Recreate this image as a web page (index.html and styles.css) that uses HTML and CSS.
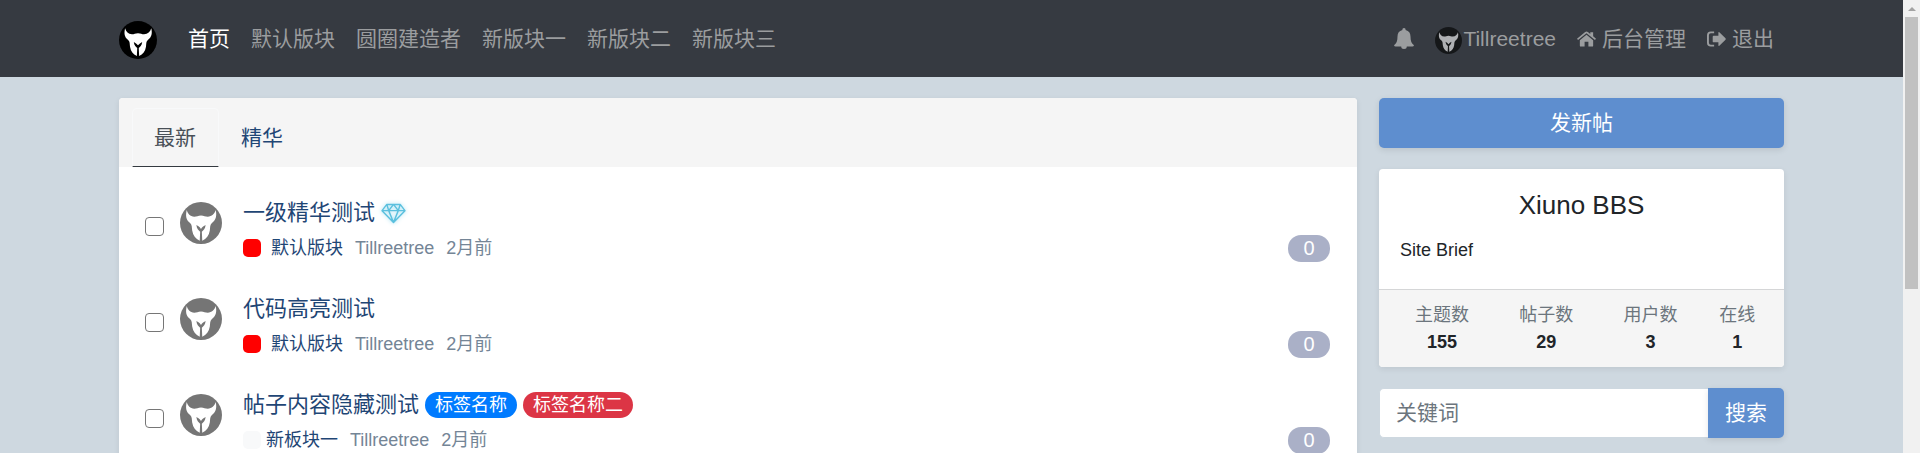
FILE: index.html
```html
<!DOCTYPE html>
<html lang="zh-CN">
<head>
    <meta charset="UTF-8">
    <meta name="viewport" content="width=device-width, initial-scale=1.0">
    <title>Xiuno BBS</title>
    <link rel="stylesheet" href="styles.css">
</head>
<body>

    <!-- Shared icons -->
    <svg class="sprite" aria-hidden="true">
        <symbol id="helmet" viewBox="0 0 100 100">
            <circle cx="50" cy="50" r="50" fill="currentColor"/>
            <path class="face" d="M16 19C19 29 24 34 34 35C40 35 43 32 50 32C57 32 60 35 66 35C76 34 82 29 85 19C88 33 86 42 76 50C71 54 72 60 71 68C69 80 63 88 53 92L52 71C56 67 60 64 61 55C57 57 53 60 50 64C47 60 43 57 39 55C40 64 44 67 48 71L47 92C37 88 31 80 29 68C28 60 29 54 24 50C14 42 13 33 16 19Z"/>
        </symbol>
    </svg>

    <div class="page">
        <header class="navbar">
            <div class="container nav-inner">
                <a class="logo" href="#"><svg><use href="#helmet"/></svg></a>
                <nav class="nav-links">
                    <a class="active" href="#">首页</a>
                    <a href="#">默认版块</a>
                    <a href="#">圆圈建造者</a>
                    <a href="#">新版块一</a>
                    <a href="#">新版块二</a>
                    <a href="#">新版块三</a>
                </nav>
                <nav class="nav-links nav-user">
                    <a href="#" aria-label="通知">
                        <svg class="icon-bell" viewBox="0 0 20 21"><path d="M10 0C11 0 11.800 .8 11.600 1.900C15 2.700 16.500 5 16.500 8.500C16.500 13 17.500 15.500 20 17.300Q19.600 18.500 18.500 18.500H12.800A2.800 2.500 0 0 1 7.200 18.500H1.500Q.4 18.500 0 17.300C2.500 15.500 3.500 13 3.500 8.500C3.500 5 5 2.700 8.400 1.900C8.200 .8 9 0 10 0Z"/></svg>
                    </a>
                    <a href="#"><svg class="user-avatar"><use href="#helmet"/></svg>Tillreetree</a>
                    <a href="#">
                        <svg class="icon-nav" viewBox="0 0 20 16"><path d="M10 3.500L17 9.300V15Q17 16 16 16H12V11H8V16H4Q3 16 3 15V9.300Z"/><path d="M10 0Q10.800 0 11.400 .5L14 2.700V.8H17V5.200L20 7.700L18.900 9L10 1.900L1.100 9L0 7.700L8.600 .5Q9.200 0 10 0Z"/></svg>
                        <span>后台管理</span>
                    </a>
                    <a href="#">
                        <svg class="icon-nav" viewBox="0 0 20 16"><path d="M7.500 0V2H4Q2 2 2 4V12Q2 14 4 14H7.500V16H4Q0 16 0 12V4Q0 0 4 0Z"/><path d="M12 1.500Q12 .3 13 1L19.500 7.300Q20 8 19.500 8.700L13 15Q12 15.700 12 14.500V11.500H7Q6 11.500 6 10.500V5.500Q6 4.500 7 4.500H12Z"/></svg>
                        <span>退出</span>
                    </a>
                </nav>
            </div>
        </header>

        <div class="container layout">
            <main class="card threads">
                <nav class="tabs">
                    <a class="active" href="#">最新</a>
                    <a href="#">精华</a>
                </nav>
                <ul class="thread-list">
                    <li class="thread">
                        <input type="checkbox" aria-label="选择 一级精华测试">
                        <svg class="avatar"><use href="#helmet"/></svg>
                        <div class="thread-body">
                            <div class="subject">
                                <a href="#">一级精华测试</a>
                                <svg class="icon-gem" viewBox="0 0 26 22"><path d="M6 1.500H20L25 8L13 20.500L1 8ZM1 8H25M6 1.500L8 8L13 20.500L18 8L20 1.500M8 8L13 1.500L18 8"/></svg>
                            </div>
                            <div class="meta">
                                <span class="forum"><i class="swatch red"></i><a href="#">默认版块</a></span>
                                <span>Tillreetree</span>
                                <span>2月前</span>
                            </div>
                        </div>
                        <span class="count">0</span>
                    </li>
                    <li class="thread">
                        <input type="checkbox" aria-label="选择 代码高亮测试">
                        <svg class="avatar"><use href="#helmet"/></svg>
                        <div class="thread-body">
                            <div class="subject">
                                <a href="#">代码高亮测试</a>
                            </div>
                            <div class="meta">
                                <span class="forum"><i class="swatch red"></i><a href="#">默认版块</a></span>
                                <span>Tillreetree</span>
                                <span>2月前</span>
                            </div>
                        </div>
                        <span class="count">0</span>
                    </li>
                    <li class="thread">
                        <input type="checkbox" aria-label="选择 帖子内容隐藏测试">
                        <svg class="avatar"><use href="#helmet"/></svg>
                        <div class="thread-body">
                            <div class="subject">
                                <a href="#">帖子内容隐藏测试</a>
                                <a class="tag blue" href="#">标签名称</a>
                                <a class="tag crimson" href="#">标签名称二</a>
                            </div>
                            <div class="meta">
                                <span class="forum tight"><i class="swatch light"></i><a href="#">新板块一</a></span>
                                <span>Tillreetree</span>
                                <span>2月前</span>
                            </div>
                        </div>
                        <span class="count">0</span>
                    </li>
                </ul>
            </main>

            <aside class="sidebar">
                <button class="btn" type="button">发新帖</button>

                <section class="card site">
                    <div class="site-intro">
                        <h2>Xiuno BBS</h2>
                        <p>Site Brief</p>
                    </div>
                    <div class="site-stats">
                        <table>
                            <thead>
                                <tr>
                                    <th>主题数</th>
                                    <th>帖子数</th>
                                    <th>用户数</th>
                                    <th>在线</th>
                                </tr>
                            </thead>
                            <tbody>
                                <tr>
                                    <td>155</td>
                                    <td>29</td>
                                    <td>3</td>
                                    <td>1</td>
                                </tr>
                            </tbody>
                        </table>
                    </div>
                </section>

                <form class="search">
                    <input type="text" placeholder="关键词" aria-label="关键词">
                    <button class="btn" type="submit">搜索</button>
                </form>
            </aside>
        </div>
    </div>

    <div class="scrollbar" aria-hidden="true">
        <div class="arrow"></div>
        <div class="thumb"></div>
    </div>

</body>
</html>
```
FILE: styles.css
```css
* {
    box-sizing: border-box;
}

body {
    margin: 0;
    display: flex;
    height: 100vh;
    overflow: hidden;
    background-color: #ced8e0;
    color: #212529;
    font-family: "Liberation Sans", "Noto Sans CJK SC", sans-serif;
    font-size: 21px;
    line-height: 32px;
}

a {
    color: #1f4675;
    text-decoration: none;
}

svg {
    flex: none;
    fill: currentColor;
}

.sprite {
    position: absolute;
    width: 0;
    height: 0;
}

.face {
    fill: #fff;
}

.page {
    flex: 1;
    min-width: 0;
    overflow: hidden;
}

.container {
    max-width: 1665px;
    margin: 0 auto;
}

/* Top bar */
.navbar {
    background-color: #363a41;
}

.nav-inner {
    display: flex;
    align-items: center;
    height: 77px;
    padding-right: 10px;
}

.logo {
    height: 38px;
    margin: 3px 31px 0 0;
    color: #000;
}

.logo svg {
    display: block;
    width: 38px;
    height: 38px;
}

.nav-links {
    display: flex;
    gap: 21px;
}

.nav-links a {
    display: flex;
    align-items: center;
    gap: 6px;
    color: #9b9d9f;
}

.nav-links a.active {
    color: #fff;
}

.nav-user {
    margin-left: auto;
}

.nav-user a:nth-child(2) {
    gap: 1px;
}

.icon-bell {
    width: 20px;
    height: 21px;
}

.user-avatar {
    width: 27px;
    height: 27px;
    margin-top: 4px;
    color: #000;
    opacity: 0.6;
}

.icon-nav {
    width: 19px;
    height: 16px;
}

/* Main columns */
.layout {
    display: flex;
    align-items: flex-start;
    gap: 22px;
    padding-top: 21px;
}

.card {
    background-color: #fff;
    border-radius: 4px;
    box-shadow: 0 2px 6px rgba(0, 0, 0, 0.08);
    overflow: hidden;
}

.threads {
    flex: 1;
    min-width: 0;
}

.tabs {
    display: flex;
    padding: 10px 13px 0;
    background-color: #f5f5f5;
}

.tabs a {
    padding: 13px 21px 12px;
    border: 1px solid transparent;
    border-radius: 5px 5px 0 0;
}

.tabs a.active {
    padding-right: 22px;
    color: #495057;
    border-color: #f8f9fa;
    border-bottom-color: #343a40;
}

/* Thread rows */
.thread-list {
    list-style: none;
    margin: 0;
    padding: 21px 27px 21px 26px;
}

.thread {
    display: flex;
    height: 96px;
    padding-top: 12px;
}

.thread input {
    width: 19px;
    height: 19px;
    margin: 17px 16px 0 0;
    appearance: none;
    border: 1px solid #767676;
    border-radius: 4px;
    background-color: #fff;
}

.thread input:checked {
    background-color: #5e8ecf;
}

.avatar {
    width: 42px;
    height: 42px;
    margin: 2px 21px 0 0;
    color: #757575;
}

.thread-body {
    flex: 1;
    min-width: 0;
}

.subject {
    display: flex;
    align-items: center;
    gap: 6px;
    height: 26px;
    font-size: 22px;
    line-height: 26px;
}

.icon-gem {
    width: 25px;
    height: 21px;
    fill: none;
    stroke: #5bc0de;
    stroke-width: 1.5;
    stroke-linejoin: round;
    filter: drop-shadow(0 0 2px #a5e0f2);
}

.tag {
    height: 26px;
    padding: 0 10px;
    border-radius: 13px;
    color: #fff;
    font-size: 18px;
}

.blue {
    background-color: #007bff;
}

.crimson {
    background-color: #dc3545;
}

.meta {
    display: flex;
    gap: 12px;
    margin-top: 8px;
    color: #748596;
    font-size: 18px;
    line-height: 28px;
}

.forum {
    display: flex;
    align-items: center;
    gap: 10px;
}

.forum.tight {
    gap: 5px;
}

.swatch {
    width: 18px;
    height: 18px;
    border-radius: 5px;
}

.red {
    background-color: #f00;
}

.light {
    background-color: #f8f9fa;
}

.count {
    align-self: flex-start;
    min-width: 42px;
    margin-top: 35px;
    border-radius: 13px;
    background-color: #aab0c7;
    color: #fff;
    font-size: 20px;
    line-height: 27px;
    text-align: center;
}

/* Sidebar */
.sidebar {
    display: flex;
    flex-direction: column;
    gap: 21px;
    width: 405px;
}

.btn {
    height: 50px;
    padding: 0 17px;
    border: none;
    border-radius: 5px;
    background-color: #5e8ecf;
    box-shadow: 0 2px 6px rgba(0, 0, 0, 0.1);
    color: #fff;
    font: inherit;
    cursor: pointer;
}

.site-intro {
    padding: 20px 21px 24px;
}

.site-intro h2 {
    margin: 0 0 14px;
    font-size: 26px;
    font-weight: 400;
    line-height: 32px;
    text-align: center;
}

.site-intro p {
    margin: 0;
    font-size: 18px;
    line-height: 30px;
}

.site-stats {
    padding: 12px 12px 11px 11px;
    border-top: 1px solid #d5d6d7;
    background-color: #f5f5f5;
}

.site-stats table {
    width: 100%;
    border-collapse: collapse;
    font-size: 18px;
    line-height: 27px;
    text-align: center;
}

.site-stats th,
.site-stats td {
    padding: 0;
}

.site-stats th {
    color: #6c757d;
    font-weight: 400;
}

.site-stats td {
    font-weight: 700;
}

.search {
    display: flex;
}

.search input {
    flex: 1;
    min-width: 0;
    padding: 0 16px;
    border: 1px solid #ced8e0;
    border-right: none;
    border-radius: 5px 0 0 5px;
    background-color: #fff;
    font: inherit;
}

.search input::placeholder {
    color: #6c757d;
    opacity: 1;
}

.search .btn {
    border-radius: 0 5px 5px 0;
}

/* Scroll track at the window edge */
.scrollbar {
    width: 17px;
    padding: 7px 2px 0;
    background-color: #f1f1f1;
}

.arrow {
    width: 8px;
    margin: 0 auto 6px;
    border: 4px solid transparent;
    border-top: none;
    border-bottom-color: #a3a3a3;
}

.thumb {
    height: 60vh;
    background-color: #c1c1c1;
}
```
